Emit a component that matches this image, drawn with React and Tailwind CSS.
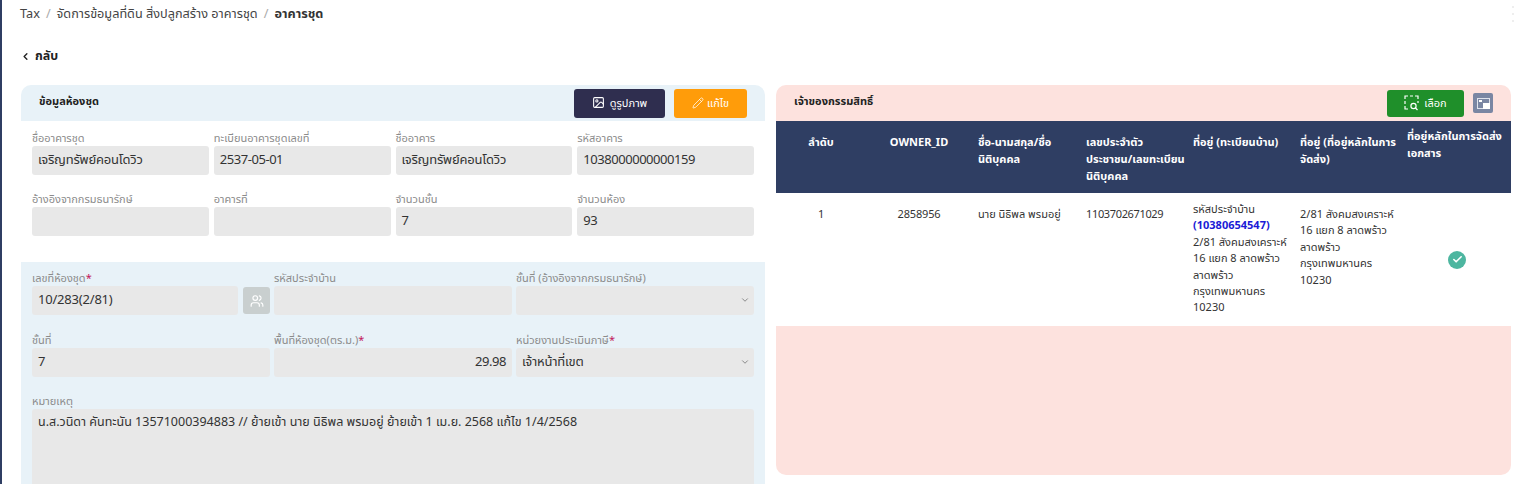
import { ChevronDown, ChevronLeft, Image, Pencil, Users, Check } from 'lucide-react'

const FONT = "font-['Noto_Sans','Noto_Sans_Thai','DejaVu_Sans',sans-serif]"

function Field({ label, value, required, right, select, className = '' }) {
  // digits in the reference run narrower than the Thai text
  const numeric = /^[\d.-]+$/.test(value)
  return (
    <div className={`min-w-0 ${className}`}>
      <div className="h-[17px] text-[11px] leading-[17px] text-[#8b8b8b] whitespace-nowrap">
        {label}
        {required && <span className="text-[#c2185b]">*</span>}
      </div>
      <div
        className={`flex h-[29px] items-center rounded-[3px] bg-[#e8e8e8] px-[6px] pb-[2px] text-[13px] text-[#333] ${
          right ? 'justify-end' : 'justify-between'
        }`}
      >
        <span className={`whitespace-nowrap ${numeric ? 'tracking-[-0.45px]' : 'tracking-[-0.2px]'}`}>{value}</span>
        {select && <ChevronDown size={10} className="-mr-[2px] text-[#777]" />}
      </div>
    </div>
  )
}

function SelectIcon() {
  return (
    <svg width="16" height="16" viewBox="0 0 16 16" fill="none" stroke="currentColor" strokeWidth="1.2">
      <path d="M1 4V1h3M6 1h3M11 1h3v3M14 6v2M1 6v3M1 11v3h3" />
      <circle cx="9.5" cy="11" r="2.6" />
      <path d="M11.5 13l2 2" />
    </svg>
  )
}

function ExpandIcon() {
  return (
    <svg width="13" height="11" viewBox="0 0 13 11">
      <rect x="0.5" y="0.5" width="12" height="10" fill="none" stroke="#dfe3ec" />
      <rect x="6" y="5" width="7" height="6" fill="#fff" />
      <rect x="2" y="2" width="3" height="2" fill="#fff" />
    </svg>
  )
}

const TOP_ROWS = [
  [
    { label: 'ชื่ออาคารชุด', value: 'เจริญทรัพย์คอนโดวิว' },
    { label: 'ทะเบียนอาคารชุดเลขที่', value: '2537-05-01' },
    { label: 'ชื่ออาคาร', value: 'เจริญทรัพย์คอนโดวิว' },
    { label: 'รหัสอาคาร', value: '1038000000000159' },
  ],
  [
    { label: 'อ้างอิงจากกรมธนารักษ์', value: '' },
    { label: 'อาคารที่', value: '' },
    { label: 'จำนวนชั้น', value: '7' },
    { label: 'จำนวนห้อง', value: '93' },
  ],
]

const HEADERS = [
  { text: 'ลำดับ', cls: 'w-[90px] pt-[12px] text-center' },
  { text: 'OWNER_ID', cls: 'w-[106px] pt-[12px] text-center' },
  { text: 'ชื่อ-นามสกุล/ชื่อนิติบุคคล', cls: 'w-[108px] pt-[12px] pl-[6px] pr-[1px] text-left' },
  { text: 'เลขประจำตัวประชาชน/เลขทะเบียนนิติบุคคล', cls: 'w-[107px] pt-[12px] pl-[6px] pr-0 text-left' },
  { text: 'ที่อยู่ (ทะเบียนบ้าน)', cls: 'w-[107px] pt-[12px] pl-[6px] pr-[1px] text-left' },
  { text: 'ที่อยู่ (ที่อยู่หลักในการจัดส่ง)', cls: 'w-[107px] pt-[12px] pl-[6px] pr-0 text-left' },
  { text: 'ที่อยู่หลักในการจัดส่งเอกสาร', cls: 'w-[110px] pt-[6px] pl-[6px] pr-[1px] text-left' },
]

export default function App() {
  return (
    <div className={`h-[484px] overflow-hidden border-l-2 border-[#2f3e63] bg-white ${FONT}`}>
      <div className="flex h-[28px] items-center gap-[6px] pl-[18px] text-[12.7px] text-[#444]">
        <span>Tax</span>
        <span className="text-[#aaa]">/</span>
        <span>จัดการข้อมูลที่ดิน สิ่งปลูกสร้าง อาคารชุด</span>
        <span className="text-[#aaa]">/</span>
        <span className="font-bold text-[#333]">อาคารชุด</span>
        <div className="ml-auto mr-[1px] flex flex-col gap-[5px]">
          <span className="h-[2px] w-[2px] bg-[#eee]" />
          <span className="h-[2px] w-[2px] bg-[#eee]" />
          <span className="h-[2px] w-[2px] bg-[#eee]" />
        </div>
      </div>

      <div className="mt-[17px] flex h-[22px] items-center gap-[4px] pl-[18px] text-[12.5px] font-bold text-[#222]">
        <ChevronLeft size={11} strokeWidth={3} />
        <span>กลับ</span>
      </div>

      <div className="mt-[18px] flex items-start gap-[11px] pl-[19px] pr-[4px]">
        <div className="w-[744px] shrink-0">
          <div className="flex h-[36px] items-center justify-between rounded-t-[10px] bg-[#e8f2f8] px-[18px]">
            <span className="pb-[3px] text-[11px] font-bold text-[#222]">ข้อมูลห้องชุด</span>
            <div className="flex items-center gap-[9px]">
              <button className="flex h-[29px] w-[91px] items-center justify-center gap-[5px] rounded-[3px] bg-[#2f2e4f] text-[11px] text-white">
                <Image size={13} className="-translate-y-[1px]" />
                ดูรูปภาพ
              </button>
              <button className="flex h-[29px] w-[73px] items-center justify-center gap-[3px] rounded-[3px] bg-[#ff9c0a] text-[11px] text-white">
                <Pencil size={12} strokeWidth={1.5} />
                แก้ไข
              </button>
            </div>
          </div>

          <div className="flex h-[141px] flex-col gap-[15px] px-[11px] pt-[8px]">
            {TOP_ROWS.map((row, i) => (
              <div key={i} className="grid grid-cols-4 gap-[5px]">
                {row.map((f) => (
                  <Field key={f.label} {...f} />
                ))}
              </div>
            ))}
          </div>

          <div className="h-[222px] bg-[#e8f2f8] px-[11px] pt-[7px]">
            <div className="grid grid-cols-3 gap-[4px]">
              <div className="flex items-end gap-[5px]">
                <Field label="เลขที่ห้องชุด" value="10/283(2/81)" required className="flex-1" />
                <button className="mb-[1px] flex h-[27px] w-[27px] shrink-0 items-center justify-center rounded-[3px] bg-[#c9cfcf] text-white">
                  <Users size={14} />
                </button>
              </div>
              <Field label="รหัสประจำบ้าน" value="" />
              <Field label="ชั้นที่ (อ้างอิงจากกรมธนารักษ์)" value="" select />
            </div>
            <div className="mt-[16px] grid grid-cols-3 gap-[4px]">
              <Field label="ชั้นที่" value="7" />
              <Field label="พื้นที่ห้องชุด(ตร.ม.)" value="29.98" required right />
              <Field label="หน่วยงานประเมินภาษี" value="เจ้าหน้าที่เขต" required select />
            </div>
            <div className="mt-[15px]">
              <div className="h-[17px] text-[11px] leading-[17px] text-[#8b8b8b]">หมายเหตุ</div>
              <div className="h-[100px] rounded-[3px] bg-[#e8e8e8] px-[6px] pt-[4px] text-[12.5px] text-[#333]">
                น.ส.วนิดา คันทะนัน 13571000394883 // ย้ายเข้า นาย นิธิพล พรมอยู่ ย้ายเข้า 1 เม.ย. 2568 แก้ไข 1/4/2568
              </div>
            </div>
          </div>
        </div>

        <div className="h-[390px] w-[735px] shrink-0 overflow-hidden rounded-[10px] bg-[#fde2de]">
          <div className="flex h-[36px] items-center justify-between px-[18px]">
            <span className="pb-[3px] text-[11px] font-bold text-[#222]">เจ้าของกรรมสิทธิ์</span>
            <div className="flex items-center gap-[9px]">
              <button className="flex h-[27px] w-[77px] items-center justify-center gap-[4px] rounded-[3px] bg-[#1f8f2a] text-[11px] text-white">
                <SelectIcon />
                เลือก
              </button>
              <button className="flex h-[20px] w-[20px] items-center justify-center rounded-[2px] bg-[#7a86a3]">
                <ExpandIcon />
              </button>
            </div>
          </div>
          <table className="w-full table-fixed border-collapse text-[11px]">
            <thead>
              <tr className="h-[72px] bg-[#2f3e63] text-white">
                {HEADERS.map((h) => (
                  <th key={h.text} className={`align-top font-bold leading-[17px] ${h.cls}`}>
                    {h.text}
                  </th>
                ))}
              </tr>
            </thead>
            <tbody>
              <tr className="h-[133px] bg-white align-top leading-[16.4px] text-[#333]">
                <td className="pt-[13px] text-center tracking-[-0.15px]">1</td>
                <td className="pt-[13px] text-center tracking-[-0.15px]">2858956</td>
                <td className="px-[6px] pt-[13px]">นาย นิธิพล พรมอยู่</td>
                <td className="px-[6px] pt-[13px] tracking-[-0.35px]">1103702671029</td>
                <td className="px-[6px] pt-[8px]">
                  รหัสประจำบ้าน
                  <div className="font-bold text-[#1a1ad6]">(10380654547)</div>
                  2/81 สังคมสงเคราะห์ 16 แยก 8 ลาดพร้าว ลาดพร้าว กรุงเทพมหานคร 10230
                </td>
                <td className="px-[6px] pt-[13px]">2/81 สังคมสงเคราะห์ 16 แยก 8 ลาดพร้าว ลาดพร้าว กรุงเทพมหานคร 10230</td>
                <td className="align-middle">
                  <div className="ml-[47px] flex h-[18px] w-[18px] items-center justify-center rounded-full bg-[#4db6a0] text-white">
                    <Check size={11} strokeWidth={3.5} />
                  </div>
                </td>
              </tr>
            </tbody>
          </table>
        </div>
      </div>
    </div>
  )
}
